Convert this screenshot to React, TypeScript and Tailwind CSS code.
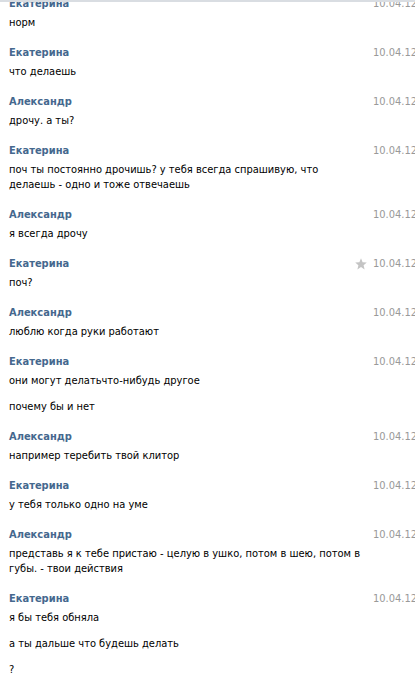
import React from 'react'

type Block = { name: string; starred?: boolean; msgs: string[] }

const BLOCKS: Block[] = [
  { name: 'Екатерина', msgs: ['норм'] },
  { name: 'Екатерина', msgs: ['что делаешь'] },
  { name: 'Александр', msgs: ['дрочу. а ты?'] },
  {
    name: 'Екатерина',
    msgs: ['поч ты постоянно дрочишь? у тебя всегда спрашивую, что\nделаешь - одно и тоже отвечаешь'],
  },
  { name: 'Александр', msgs: ['я всегда дрочу'] },
  { name: 'Екатерина', starred: true, msgs: ['поч?'] },
  { name: 'Александр', msgs: ['люблю когда руки работают'] },
  { name: 'Екатерина', msgs: ['они могут делатьчто-нибудь другое', 'почему бы и нет'] },
  { name: 'Александр', msgs: ['например теребить твой клитор'] },
  { name: 'Екатерина', msgs: ['у тебя только одно на уме'] },
  {
    name: 'Александр',
    msgs: ['представь я к тебе пристаю - целую в ушко, потом в шею, потом в\nгубы. - твои действия'],
  },
  { name: 'Екатерина', msgs: ['я бы тебя обняла', 'а ты дальше что будешь делать', '?'] },
]

function Star() {
  return (
    <svg viewBox="0 0 12 12" className="w-[12px] h-[12px]">
      <polygon
        points="6,0.3 7.6,4.2 11.8,4.5 8.6,7.2 9.6,11.4 6,9.1 2.4,11.4 3.4,7.2 0.2,4.5 4.4,4.2"
        fill="#c4c4c4"
      />
    </svg>
  )
}

export default function App() {
  return (
    <div
      className="relative w-[415px] h-[677px] overflow-hidden bg-white text-[11px] text-black"
      style={{ fontFamily: '"DejaVu Sans Condensed", "DejaVu Sans", Tahoma, sans-serif' }}
    >
      <div className="absolute top-0 left-0 right-0 h-[2px] bg-[#d9dde2] z-10" />
      <div className="-mt-[12px]">
        {BLOCKS.map((b, i) => (
          <div key={i} className="flex pl-[9px] pt-[8px] pb-[7px]">
            <div className="w-[341px] shrink-0">
              <div className="font-bold text-[#45688e] leading-[15px]">{b.name}</div>
              <div className="mt-[4px] flex flex-col gap-[11px]">
                {b.msgs.map((m, j) => (
                  <div key={j} className="leading-[15px] whitespace-pre">{m}</div>
                ))}
              </div>
            </div>
            <div className="flex items-start shrink-0">
              <div className="w-[23px] h-[15px] flex items-center pl-[5px]">
                {b.starred && <Star />}
              </div>
              <span className="leading-[15px] text-[#999999] whitespace-nowrap">10.04.12</span>
            </div>
          </div>
        ))}
      </div>
    </div>
  )
}
